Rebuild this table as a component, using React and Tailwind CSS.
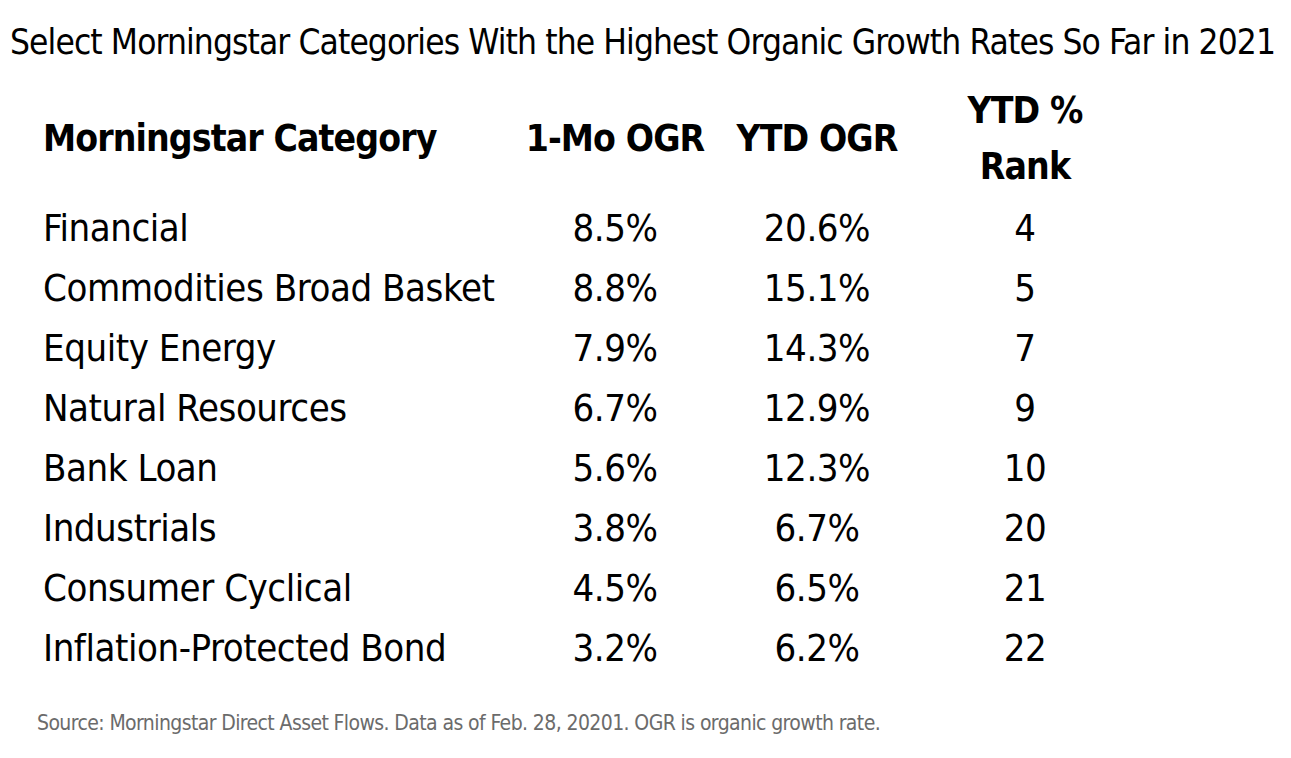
import React from 'react'

const rows = [
    ['Financial', '8.5%', '20.6%', '4'],
    ['Commodities Broad Basket', '8.8%', '15.1%', '5'],
    ['Equity Energy', '7.9%', '14.3%', '7'],
    ['Natural Resources', '6.7%', '12.9%', '9'],
    ['Bank Loan', '5.6%', '12.3%', '10'],
    ['Industrials', '3.8%', '6.7%', '20'],
    ['Consumer Cyclical', '4.5%', '6.5%', '21'],
    ['Inflation-Protected Bond', '3.2%', '6.2%', '22'],
]

export default function App() {
    return (
        <div className="w-[1291px] h-[758px] bg-white text-black overflow-hidden font-['Liberation_Sans_Narrow','DejaVu_Sans_Condensed',sans-serif]">
            {/* titulo */}
            <h1 className="pl-[10px] pt-[14px] text-[35px] tracking-[-0.9px] leading-[56px] font-normal whitespace-nowrap">
                Select Morningstar Categories With the Highest Organic Growth Rates So Far in 2021
            </h1>

            {/* tabla */}
            <div className="pl-[43px] mt-[13px]">
                <div className="grid grid-cols-[487px_170px_234px_182px] items-center font-bold text-[37px] tracking-[-0.9px] leading-[56px] whitespace-nowrap">
                    <div>Morningstar Category</div>
                    <div className="flex justify-center">1-Mo OGR</div>
                    <div className="flex justify-center">YTD OGR</div>
                    <div className="flex flex-col items-center">
                        <span>YTD %</span>
                        <span>Rank</span>
                    </div>
                </div>
                <div className="pt-[3px]">
                    {rows.map((r, i) => (
                        <div key={i} className="grid grid-cols-[487px_170px_234px_182px] items-center text-[38px] tracking-[-0.45px] leading-[60px] whitespace-nowrap">
                            <div>{r[0]}</div>
                            <div className="flex justify-center">{r[1]}</div>
                            <div className="flex justify-center">{r[2]}</div>
                            <div className="flex justify-center">{r[3]}</div>
                        </div>
                    ))}
                </div>
            </div>

            {/* fuente */}
            <p className="pl-[37px] mt-[30px] text-[21px] tracking-[-0.6px] leading-[30px] text-[#6b6b6b] whitespace-nowrap">
                Source: Morningstar Direct Asset Flows. Data as of Feb. 28, 20201. OGR is organic growth rate.
            </p>
        </div>
    )
}
